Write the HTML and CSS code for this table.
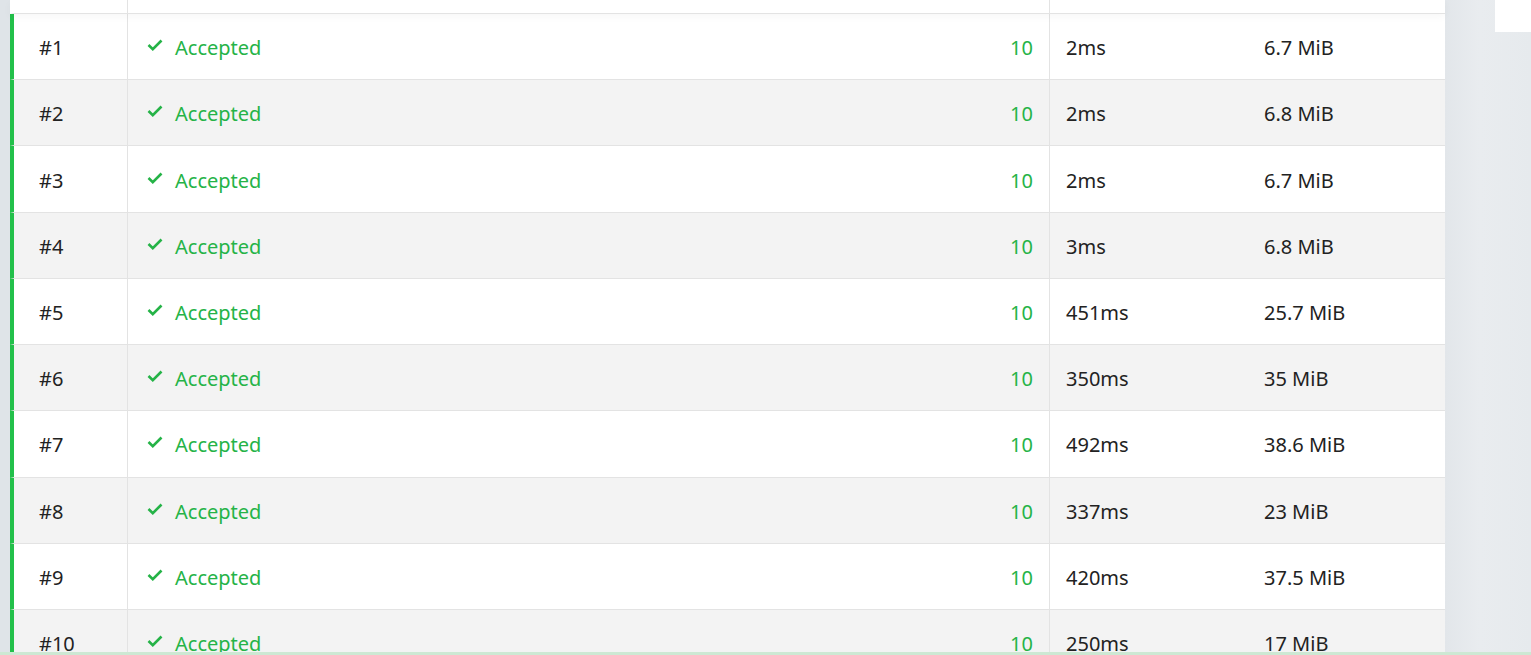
FILE: index.html
```html
<!DOCTYPE html>
<html>
<head>
<meta charset="utf-8">
<link rel="stylesheet" href="styles.css">
</head>
<body>
<div class="page">
  <div class="left-strip"></div>
  <div class="table">
    <div class="row head">
      <div class="cell c1"></div>
      <div class="cell c2"></div>
      <div class="cell c3"></div>
      <div class="cell c4"></div>
    </div>
    <div class="row">
      <div class="cell c1">#1</div>
      <div class="cell c2"><span class="status"><svg class="check" viewBox="0 0 16 12"><path d="M1.5 6 L5.8 10.2 L14.5 1.5" fill="none" stroke="currentColor" stroke-width="2.6"/></svg>Accepted</span><span class="score">10</span></div>
      <div class="cell c3">2ms</div>
      <div class="cell c4">6.7 MiB</div>
    </div>
    <div class="row alt">
      <div class="cell c1">#2</div>
      <div class="cell c2"><span class="status"><svg class="check" viewBox="0 0 16 12"><path d="M1.5 6 L5.8 10.2 L14.5 1.5" fill="none" stroke="currentColor" stroke-width="2.6"/></svg>Accepted</span><span class="score">10</span></div>
      <div class="cell c3">2ms</div>
      <div class="cell c4">6.8 MiB</div>
    </div>
    <div class="row">
      <div class="cell c1">#3</div>
      <div class="cell c2"><span class="status"><svg class="check" viewBox="0 0 16 12"><path d="M1.5 6 L5.8 10.2 L14.5 1.5" fill="none" stroke="currentColor" stroke-width="2.6"/></svg>Accepted</span><span class="score">10</span></div>
      <div class="cell c3">2ms</div>
      <div class="cell c4">6.7 MiB</div>
    </div>
    <div class="row alt">
      <div class="cell c1">#4</div>
      <div class="cell c2"><span class="status"><svg class="check" viewBox="0 0 16 12"><path d="M1.5 6 L5.8 10.2 L14.5 1.5" fill="none" stroke="currentColor" stroke-width="2.6"/></svg>Accepted</span><span class="score">10</span></div>
      <div class="cell c3">3ms</div>
      <div class="cell c4">6.8 MiB</div>
    </div>
    <div class="row">
      <div class="cell c1">#5</div>
      <div class="cell c2"><span class="status"><svg class="check" viewBox="0 0 16 12"><path d="M1.5 6 L5.8 10.2 L14.5 1.5" fill="none" stroke="currentColor" stroke-width="2.6"/></svg>Accepted</span><span class="score">10</span></div>
      <div class="cell c3">451ms</div>
      <div class="cell c4">25.7 MiB</div>
    </div>
    <div class="row alt">
      <div class="cell c1">#6</div>
      <div class="cell c2"><span class="status"><svg class="check" viewBox="0 0 16 12"><path d="M1.5 6 L5.8 10.2 L14.5 1.5" fill="none" stroke="currentColor" stroke-width="2.6"/></svg>Accepted</span><span class="score">10</span></div>
      <div class="cell c3">350ms</div>
      <div class="cell c4">35 MiB</div>
    </div>
    <div class="row">
      <div class="cell c1">#7</div>
      <div class="cell c2"><span class="status"><svg class="check" viewBox="0 0 16 12"><path d="M1.5 6 L5.8 10.2 L14.5 1.5" fill="none" stroke="currentColor" stroke-width="2.6"/></svg>Accepted</span><span class="score">10</span></div>
      <div class="cell c3">492ms</div>
      <div class="cell c4">38.6 MiB</div>
    </div>
    <div class="row alt">
      <div class="cell c1">#8</div>
      <div class="cell c2"><span class="status"><svg class="check" viewBox="0 0 16 12"><path d="M1.5 6 L5.8 10.2 L14.5 1.5" fill="none" stroke="currentColor" stroke-width="2.6"/></svg>Accepted</span><span class="score">10</span></div>
      <div class="cell c3">337ms</div>
      <div class="cell c4">23 MiB</div>
    </div>
    <div class="row">
      <div class="cell c1">#9</div>
      <div class="cell c2"><span class="status"><svg class="check" viewBox="0 0 16 12"><path d="M1.5 6 L5.8 10.2 L14.5 1.5" fill="none" stroke="currentColor" stroke-width="2.6"/></svg>Accepted</span><span class="score">10</span></div>
      <div class="cell c3">420ms</div>
      <div class="cell c4">37.5 MiB</div>
    </div>
    <div class="row alt">
      <div class="cell c1">#10</div>
      <div class="cell c2"><span class="status"><svg class="check" viewBox="0 0 16 12"><path d="M1.5 6 L5.8 10.2 L14.5 1.5" fill="none" stroke="currentColor" stroke-width="2.6"/></svg>Accepted</span><span class="score">10</span></div>
      <div class="cell c3">250ms</div>
      <div class="cell c4">17 MiB</div>
    </div>
  </div>
  <div class="right-area">
    <div class="right-box"></div>
  </div>
</div>
<div class="bottom-line"></div>
</body>
</html>
```

FILE: styles.css
```css
html, body {
  margin: 0;
  padding: 0;
  height: 100%;
  overflow: hidden;
}
body {
  font-family: "Noto Sans", "Open Sans", "Liberation Sans", sans-serif;
  font-size: 20px;
  color: #222222;
  background: #e4e8eb;
}
.page {
  display: flex;
  height: 655px;
}
.left-strip {
  width: 10px;
  flex: none;
  background: #dfe4e8;
}
.table {
  width: 1435px;
  flex: none;
  background: #fff;
}
.row {
  display: grid;
  grid-template-columns: 114px 922px 197px 1fr;
  height: 66.22px;
  box-sizing: border-box;
  border-bottom: 1px solid #e3e3e3;
  border-left: 4px solid #22c04a;
  background: #fff;
}
.row.alt {
  background: #f3f3f3;
}
.row.head {
  height: 14px;
  border-left: 4px solid #fff;
  position: relative;
  z-index: 1;
  box-shadow: 0 3px 8px rgba(0, 0, 0, 0.035);
}
.cell {
  display: flex;
  align-items: center;
  box-sizing: border-box;
  padding-top: 2px;
}
.c1 {
  padding-left: 25px;
  border-right: 1px solid #e3e3e3;
}
.c2 {
  padding-left: 19px;
  padding-right: 16px;
  justify-content: space-between;
  border-right: 1px solid #e3e3e3;
  color: #25b347;
}
.c3 {
  padding-left: 16px;
}
.c4 {
  padding-left: 17px;
}
.status {
  display: flex;
  align-items: center;
}
.check {
  width: 16px;
  height: 12px;
  margin-right: 12px;
  margin-top: -5px;
}
.right-area {
  flex: 1;
  background: linear-gradient(90deg, #e2e6ea 0%, #e9ecef 40%, #e6eaed 100%);
  display: flex;
  justify-content: flex-end;
  align-items: flex-start;
}
.right-box {
  width: 36px;
  height: 32px;
  background: #fff;
}
.bottom-line {
  position: fixed;
  left: 0;
  right: 0;
  bottom: 0;
  height: 3px;
  background: #cde8d3;
}
```
